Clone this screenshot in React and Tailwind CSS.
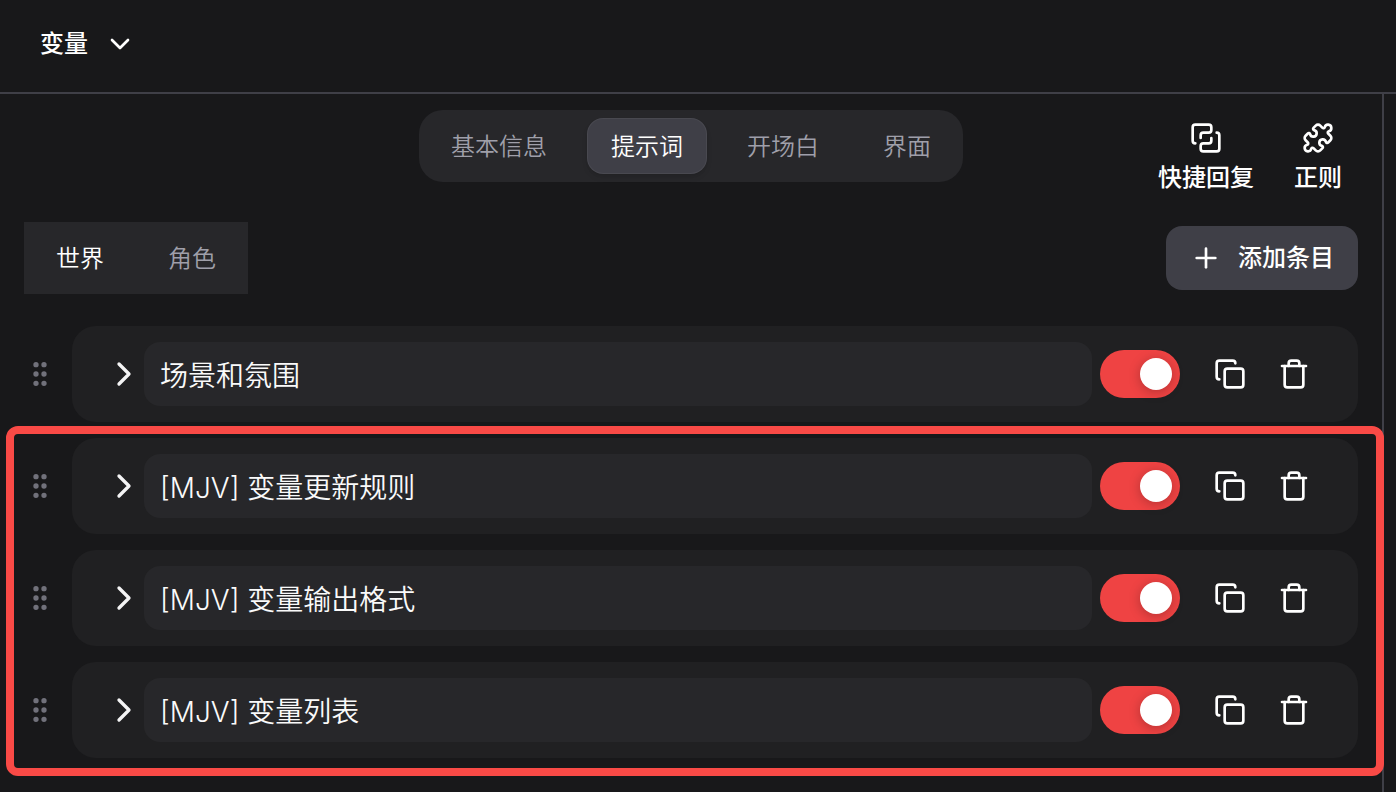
import React, { useState } from 'react';
import { ChevronDown, ChevronRight, Copy, GripVertical, Plus, Puzzle, Trash } from 'lucide-react';

const TABS = ['基本信息', '提示词', '开场白', '界面'];
const SCOPES = ['世界', '角色'];

const INITIAL_ENTRIES = [
  { id: 1, name: '场景和氛围', enabled: true },
  { id: 2, name: '[MJV] 变量更新规则', enabled: true },
  { id: 3, name: '[MJV] 变量输出格式', enabled: true },
  { id: 4, name: '[MJV] 变量列表', enabled: true },
];

function QuickReplyIcon() {
  return (
    <svg
      width="32"
      height="32"
      viewBox="0 0 24 24"
      fill="none"
      stroke="currentColor"
      strokeWidth="2"
      strokeLinecap="round"
      strokeLinejoin="round"
      aria-hidden="true"
    >
      <path d="M4 16a2 2 0 0 1-2-2V4a2 2 0 0 1 2-2h10a2 2 0 0 1 2 2v2a2 2 0 0 1-2 2h-4a2 2 0 0 0-2 2v2" />
      <path d="M20 8a2 2 0 0 1 2 2v10a2 2 0 0 1-2 2H10a2 2 0 0 1-2-2v-2a2 2 0 0 1 2-2h4a2 2 0 0 0 2-2v-2" />
    </svg>
  );
}

function EntryRow({ entry, onChange }) {
  return (
    <li className="flex items-center gap-4">
      <button type="button" aria-label="拖动" className="w-8 shrink-0 cursor-grab text-zinc-500">
        <GripVertical size={32} />
      </button>
      <div className="flex flex-1 min-w-0 items-center rounded-3xl bg-[#202022] py-4 px-8">
        <button type="button" aria-label="展开" className="shrink-0 text-zinc-100">
          <ChevronRight size={40} />
        </button>
        <input
          type="text"
          aria-label="条目名称"
          value={entry.name}
          onChange={(e) => onChange({ ...entry, name: e.target.value })}
          className="h-16 flex-1 min-w-0 rounded-2xl bg-[#27272a] px-4 text-[28px] text-zinc-50 outline-none"
        />
        <label className="relative ml-2 h-12 w-20 shrink-0 cursor-pointer">
          <input
            type="checkbox"
            aria-label="启用"
            checked={entry.enabled}
            onChange={(e) => onChange({ ...entry, enabled: e.target.checked })}
            className="peer h-12 w-20 appearance-none rounded-full bg-zinc-700 checked:bg-[#ef4343]"
          />
          <span className="pointer-events-none absolute top-2 left-2 size-8 rounded-full bg-white shadow-[0_2px_12px_rgba(0,0,0,0.25)] transition-transform peer-checked:translate-x-8" />
        </label>
        <div className="ml-[18px] flex shrink-0 text-white">
          <button type="button" aria-label="复制" className="flex size-16 items-center justify-center">
            <Copy size={32} />
          </button>
          <button type="button" aria-label="删除" className="flex size-16 items-center justify-center">
            <Trash size={32} />
          </button>
        </div>
      </div>
    </li>
  );
}

export default function App() {
  const [tab, setTab] = useState('提示词');
  const [scope, setScope] = useState('世界');
  const [entries, setEntries] = useState(INITIAL_ENTRIES);

  const updateEntry = (next) => {
    setEntries(entries.map((e) => (e.id === next.id ? next : e)));
  };

  const addEntry = () => {
    setEntries([...entries, { id: Date.now(), name: '', enabled: true }]);
  };

  return (
    <div className="flex min-h-screen flex-col bg-[#18181a] font-['Inter','Noto_Sans_CJK_SC',sans-serif] text-2xl font-[350] text-white">
      {/* Header */}
      <header className="border-b-2 border-zinc-700 px-10 pt-7 pb-8">
        <button type="button" className="flex items-center gap-4 font-medium">
          变量
          <ChevronDown size={32} />
        </button>
      </header>

      <main className="mr-3 flex-1 border-r-2 border-zinc-700 px-6 pt-4 pb-4">
        {/* Tabs + tools */}
        <div className="grid grid-cols-[1fr_auto_1fr] items-start">
          <nav className="col-start-2 flex gap-4 rounded-3xl bg-[#27272a] p-2">
            {TABS.map((t) => (
              <button
                key={t}
                type="button"
                onClick={() => setTab(t)}
                className={`h-14 rounded-2xl px-6 pt-0.5 ${
                  t === tab
                    ? 'bg-zinc-700 text-white shadow-md inset-ring inset-ring-white/5'
                    : 'text-zinc-400'
                }`}
              >
                {t}
              </button>
            ))}
          </nav>
          <div className="flex justify-end gap-2 font-medium">
            <button type="button" className="flex flex-col items-center gap-2 px-4 py-3">
              <QuickReplyIcon />
              快捷回复
            </button>
            <button type="button" className="flex flex-col items-center gap-2 px-4 py-3">
              <Puzzle size={32} />
              正则
            </button>
          </div>
        </div>

        {/* Scope switch */}
        <div className="mt-4 flex items-center justify-between">
          <div className="flex gap-4 bg-[#27272a] p-2">
            {SCOPES.map((s) => (
              <button
                key={s}
                type="button"
                onClick={() => setScope(s)}
                className={`h-14 px-6 pt-0.5 ${s === scope ? 'text-white' : 'text-zinc-400'}`}
              >
                {s}
              </button>
            ))}
          </div>
          <button
            type="button"
            onClick={addEntry}
            className="flex h-16 items-center gap-4 rounded-2xl bg-zinc-700 px-6 font-medium"
          >
            <Plus size={32} />
            添加条目
          </button>
        </div>

        {/* Entries */}
        <ul className="mt-8 mb-4 flex flex-col gap-4">
          {entries.slice(0, 1).map((e) => (
            <EntryRow key={e.id} entry={e} onChange={updateEntry} />
          ))}
        </ul>
        <div className="relative">
          <ul className="flex flex-col gap-4">
            {entries.slice(1).map((e) => (
              <EntryRow key={e.id} entry={e} onChange={updateEntry} />
            ))}
          </ul>
          {/* Highlight frame */}
          <div className="pointer-events-none absolute -top-3 -right-[26px] -bottom-[18px] -left-[18px] rounded-xl border-8 border-[#f94a46]" />
        </div>
      </main>
    </div>
  );
}
